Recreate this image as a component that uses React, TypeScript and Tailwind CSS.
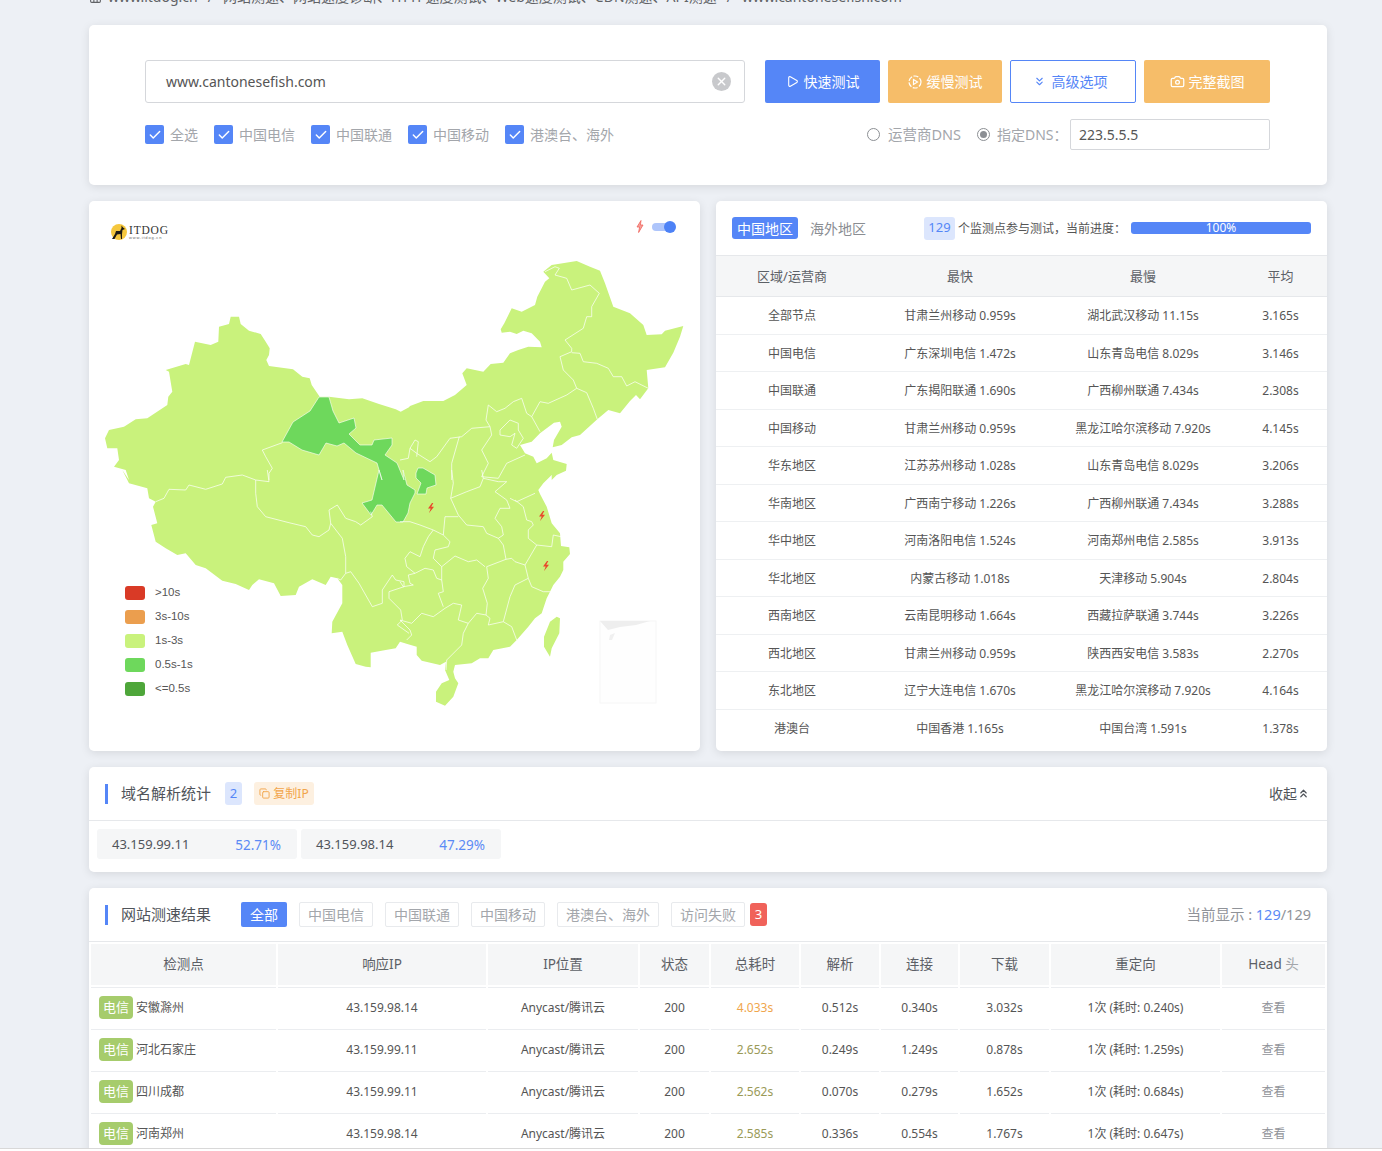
import { Play, Camera, ChevronsDown, ChevronsUp, Copy, Check, X, House } from "lucide-react";

const font = "font-['Noto_Sans','Noto_Sans_CJK_SC',sans-serif]";

// map points are read off the 3x crops: [origin x, origin y, "x,y x,y ..."]
type Seg = [number, number, string];

const toPage = ([ox, oy, s]: Seg) =>
  s
    .trim()
    .split(/\s+/)
    .map((p) => {
      const [x, y] = p.split(",").map(Number);
      return `${(ox + x / 3).toFixed(1)},${(oy + y / 3).toFixed(1)}`;
    })
    .join(" ");

const outline: Seg[] = [
  [89, 200, "425,350 450,350 455,372 480,392 515,402 530,425 542,445 540,465 532,480 540,498 612,508 640,530 662,535 668,555 692,590 720,590 780,598 820,595 870,612 920,628 935,635 960,622"],
  [400, 200, "30,618 70,603 130,603 165,585 200,555 187,520 200,505 250,515 272,492 310,488 330,460 355,450 385,440 425,442 420,425 395,400 370,392 350,402 330,395 305,398 302,388 313,370 335,325 365,335 405,315 412,290 435,245 448,235 430,215 455,195 530,183 570,200 600,212 615,250 640,320 690,340 730,375 740,405 785,403 795,392 850,378 840,410 820,458 795,502 740,510 745,565 720,598 708,585 690,603 660,640 625,630 592,658 540,705 515,712 485,735 458,742 462,720 485,680 480,665 462,668 420,700 395,725 360,735 375,760 400,770 410,790 440,775 455,758 460,780 500,792 498,812 470,825 455,840"],
  [400, 470, "455,15 430,40 415,60 420,72 440,110 455,160 480,190 483,228 508,232 510,252 490,275 490,300 480,320 460,345 450,365 440,385 425,430 405,445 385,470 350,510 330,530 280,540 265,565 240,565 215,580 165,585 160,605 165,625 175,640 160,680 135,707 108,695 108,665 125,640 148,630 135,600 138,575 120,585 65,572 50,555 50,530 22,522 0,515"],
  [89, 470, "920,535 890,540 845,548 845,592 830,590 800,582 775,525 760,485 728,490 730,455 760,400 760,345 745,325 725,320 710,345 670,328 630,350 620,375 575,378 555,340 510,328 490,345 480,360 440,342 400,332 350,295 320,285 290,250 265,255 230,235 200,215 187,165 205,160 192,110 200,95 180,85 175,55 120,40 100,0"],
  [89, 200, "120,840 110,810 75,800 90,780 85,745 55,745 48,715 60,690 105,680 140,658 175,655 235,615 238,590 250,575 240,515 230,510 290,492 300,495 318,425 365,435 388,425 390,380 420,372"],
];

const gansu =
  "319,397 329,397 333,411 339,423 354,418 356,428 349,434 360,445 372,445 374,440 392,438 392,445 385,455 397,463 404,480 403,470 407,485 415,490 415,493 410,503 408,513 403,522 396,522 382,505 377,505 371,515 362,503 372,500 379,470 382,480 377,463 356,453 344,443 337,446 326,443 319,455 302,450 289,442 282,442 293,422 310,411";
const ningxia = "416,473 418,468 423,468 435,475 436,485 427,488 426,494 417,494 421,483 416,478";

const borders: Seg[] = [
  [89, 200, "520,750 580,728"],
  [89, 200, "520,750 530,770 550,805 540,820 540,840"],
  [89, 470, "200,95 225,85 240,58 290,60 300,45 350,58 400,42 410,22 460,15 500,30 540,35 535,0"],
  [89, 470, "500,30 500,70 505,110 530,140 600,158 650,170 670,195 690,200 720,180 725,160 720,120 745,105 770,145 800,155 815,165 850,140 845,125"],
  [89, 470, "725,160 760,205 770,260 770,310 755,330 745,325"],
  [89, 470, "770,310 785,305 810,340 850,410 880,400 880,360 910,315 920,330 945,335 945,350 900,365 900,385 935,420 940,450 925,465 960,490"],
  [400, 470, "155,0 160,40 152,85 175,135 200,165 250,170 260,190 295,205 310,225 318,268"],
  [400, 470, "152,85 200,65 240,50 250,25 295,35 320,35 285,65 320,90 330,115 300,115 285,145 305,170 310,195 295,205"],
  [400, 470, "330,85 350,95 405,70"],
  [400, 470, "345,90 370,110 380,150 395,155 400,165 385,180 385,205 410,225 455,230 460,195 483,200"],
  [400, 470, "410,225 375,285 385,325 395,350 430,365 450,365"],
  [400, 470, "318,268 260,290 265,325 248,355 262,400 258,435 270,445 265,465 310,455 330,380 345,345 385,325"],
  [400, 470, "310,455 335,470 350,510"],
  [400, 470, "258,435 230,430 205,460 175,450 185,405 160,400 135,415 100,440 65,430 35,460 0,450"],
  [400, 470, "318,268 335,265 345,275 375,285"],
  [400, 470, "125,290 165,258 205,275 230,270 255,290"],
  [400, 470, "125,290 125,330 130,365 115,370 130,410"],
  [400, 470, "205,460 190,490 185,525 140,570 138,600"],
  [400, 470, "130,195 150,215 145,230 105,240 100,265 125,290"],
  [400, 470, "130,195 100,180 85,200 70,230 60,260 30,245 15,265 20,290 45,310 75,295 100,300 110,325 125,330"],
  [400, 470, "130,195 135,140 175,140"],
  [400, 470, "45,310 25,315 30,340 40,345 10,350 0,335"],
  [400, 470, "0,155 30,155 60,165 100,180"],
  [400, 470, "0,450 30,480 35,495 20,510"],
  [400, 470, "250,25 245,0"],
  [400, 200, "435,215 465,200 478,205 465,225 500,235 515,270 570,255 598,280 575,320 575,350 560,350 550,385 495,420 515,445 515,455 480,470 490,510 520,540 530,565 500,585 445,610 420,605 395,650 420,695"],
  [400, 200, "515,458 540,460 550,485 590,490 625,505 640,530 665,530 680,558 705,545 745,565"],
  [400, 200, "530,565 560,578 580,625 592,658"],
  [400, 200, "395,650 380,640 365,595 340,605 315,625 290,635 265,615 258,660 270,680 215,685 185,710 150,715 110,770 90,785 50,760 30,745 45,720 55,725 50,770"],
  [400, 200, "270,680 275,705 245,750 265,790 245,830"],
  [400, 200, "300,690 330,660 355,670 355,690 370,715 350,745 335,735 345,700 330,710 300,705 300,690"],
  [400, 200, "375,765 320,790 295,835 245,830"],
  [400, 200, "178,710 155,790 155,840"],
  [400, 200, "0,780 25,775 30,745"],
];

const bolt = "M4.5 0 L0.5 5.5 L3.2 5.5 L1.5 10 L6.5 3.8 L3.8 3.8 L5.8 0 Z";

function ChinaMap() {
  return (
    <svg viewBox="89 201 611 550" className="block w-full h-full">
      <polygon points={outline.map(toPage).join(" ")} fill="#c9f27c" />
      <polygon points={toPage([400, 470, "470,440 480,445 478,490 455,535 450,560 432,530 432,500 450,455"])} fill="#c9f27c" />
      <polygon points={gansu} fill="#6ed85c" stroke="#fff" strokeWidth="0.6" />
      <polygon points={ningxia} fill="#6ed85c" stroke="#fff" strokeWidth="0.6" />
      {borders.map((b, i) => (
        <polyline key={i} points={toPage(b)} fill="none" stroke="#fff" strokeWidth="0.7" />
      ))}
      {/* south china sea inset */}
      <rect x="600" y="621" width="56" height="82" fill="#fefefe" stroke="#f6f6f6" />
      <polygon points="600,621 650,621 636,625 620,627 608,630" fill="#eeeeee" />
      <polygon points="610,635 615,633 612,640 609,640" fill="#f0f0f0" />
      {[[431, 508], [542, 516], [546, 566]].map(([x, y]) => (
        <path key={x} d={bolt} fill="#e8492c" transform={`translate(${x - 3.5} ${y - 5})`} />
      ))}
    </svg>
  );
}

function Logo() {
  return (
    <div className="absolute left-[22px] top-[22px] flex items-center">
      <svg viewBox="0 0 16 16" className="w-[16px] h-[16px]">
        <circle cx="8" cy="8" r="8" fill="#f5c73d" />
        <path d="M1 15 L4 10 L5 7 L9 7 L10.5 4 L10.5 1.5 L12 3.5 L14 5 L11.5 6 L11 10 L11 15 L10 15 L9.5 10 L6 10.5 L3.5 15 Z" fill="#1d1a14" />
      </svg>
      <div className="ml-[2px] mt-[2px] flex flex-col">
        <span className="font-['Liberation_Serif',serif] text-[11.5px] leading-[11px] tracking-[0.8px] text-[#333]">ITDOG</span>
        <span className="font-['Liberation_Sans',sans-serif] text-[4px] leading-[4px] tracking-[0.8px] text-[#666]">www.itdog.cn</span>
      </div>
    </div>
  );
}

const legend = [
  { label: ">10s", bg: "bg-[#d93a26]" },
  { label: "3s-10s", bg: "bg-[#eb9e4e]" },
  { label: "1s-3s", bg: "bg-[#c9f27c]" },
  { label: "0.5s-1s", bg: "bg-[#6ed85c]" },
  { label: "<=0.5s", bg: "bg-[#4ea63a]" },
];

const summary = [
  ["全部节点", "甘肃兰州移动 0.959s", "湖北武汉移动 11.15s", "3.165s"],
  ["中国电信", "广东深圳电信 1.472s", "山东青岛电信 8.029s", "3.146s"],
  ["中国联通", "广东揭阳联通 1.690s", "广西柳州联通 7.434s", "2.308s"],
  ["中国移动", "甘肃兰州移动 0.959s", "黑龙江哈尔滨移动 7.920s", "4.145s"],
  ["华东地区", "江苏苏州移动 1.028s", "山东青岛电信 8.029s", "3.206s"],
  ["华南地区", "广西南宁移动 1.226s", "广西柳州联通 7.434s", "3.288s"],
  ["华中地区", "河南洛阳电信 1.524s", "河南郑州电信 2.585s", "3.913s"],
  ["华北地区", "内蒙古移动 1.018s", "天津移动 5.904s", "2.804s"],
  ["西南地区", "云南昆明移动 1.664s", "西藏拉萨联通 3.744s", "3.226s"],
  ["西北地区", "甘肃兰州移动 0.959s", "陕西西安电信 3.583s", "2.270s"],
  ["东北地区", "辽宁大连电信 1.670s", "黑龙江哈尔滨移动 7.920s", "4.164s"],
  ["港澳台", "中国香港 1.165s", "中国台湾 1.591s", "1.378s"],
];

const results = [
  ["安徽滁州", "43.159.98.14", "4.033s", "0.512s", "0.340s", "3.032s", "1次 (耗时: 0.240s)", "text-[#f0a64c]"],
  ["河北石家庄", "43.159.99.11", "2.652s", "0.249s", "1.249s", "0.878s", "1次 (耗时: 1.259s)", "text-[#9a9a58]"],
  ["四川成都", "43.159.99.11", "2.562s", "0.070s", "0.279s", "1.652s", "1次 (耗时: 0.684s)", "text-[#9a9a58]"],
  ["河南郑州", "43.159.98.14", "2.585s", "0.336s", "0.554s", "1.767s", "1次 (耗时: 0.647s)", "text-[#9a9a58]"],
];

const checks = ["全选", "中国电信", "中国联通", "中国移动", "港澳台、海外"];
const filters = ["中国电信", "中国联通", "中国移动", "港澳台、海外", "访问失败"];

const th = "bg-[#f5f6f7] h-[41px] text-[13.5px] font-normal text-[#5c6066] text-center";
const td = "h-[40px] border-t border-[#ebedf0] text-[12px] text-center";

function SectionTitle({ children }: { children: string }) {
  return (
    <div className="flex items-center">
      <span className="w-[3px] h-[20px] bg-[#5586f7] mr-[13px]" />
      <span className="text-[15px] text-[#50545a]">{children}</span>
    </div>
  );
}

export default function App() {
  return (
    <div className={`${font} h-[1148px] overflow-hidden bg-[#edf0f5] border-b border-[#d8d8d8] box-content`}>
      <div className="ml-[89px] w-[1238px]">
        <div className="h-[25px] overflow-hidden">
          <div className="mt-[-13px] flex items-center gap-[6px] text-[14px] leading-[20px] text-[#606266] whitespace-nowrap">
            <House size={13} />
            <span>www.itdog.cn</span>
            <span className="mx-[4px]">/</span>
            <span>网站测速、网站速度诊断、HTTP速度测试、Web速度测试、CDN测速、API测速</span>
            <span className="mx-[4px]">/</span>
            <span>www.cantonesefish.com</span>
          </div>
        </div>

        <div className="h-[160px] bg-white rounded-[5px] shadow-[0_2px_10px_rgba(0,0,0,0.1)] pl-[56px] pr-[57px] pt-[35px]">
          <div className="flex items-center h-[43px]">
            <div className="w-[600px] h-[43px] border border-[#d5d7db] rounded-[3px] flex items-center justify-between pl-[20px] pr-[13px]">
              <span className="text-[14px] text-[#555]">www.cantonesefish.com</span>
              <span className="w-[19px] h-[19px] rounded-full bg-[#c8c9cc] flex items-center justify-center">
                <X size={13} color="#fff" strokeWidth={2.5} />
              </span>
            </div>
            <button className="ml-[20px] w-[115px] h-[43px] rounded-[2px] bg-[#5586f7] text-white text-[14px] flex items-center justify-center gap-[5px]">
              <Play size={13} />
              快速测试
            </button>
            <button className="ml-[8px] w-[114px] h-[43px] rounded-[2px] bg-[#f6bd69] text-white text-[14px] flex items-center justify-center gap-[5px]">
              <svg viewBox="0 0 14 14" className="w-[14px] h-[14px]" fill="none" stroke="#fff" strokeWidth="1.2">
                <circle cx="7" cy="7" r="6" strokeDasharray="5 1.5" />
                <path d="M5.5 4.5 L9.5 7 L5.5 9.5 Z" />
              </svg>
              缓慢测试
            </button>
            <button className="ml-[8px] w-[126px] h-[43px] rounded-[2px] border border-[#5586f7] bg-white text-[#5586f7] text-[14px] flex items-center justify-center gap-[6px] pr-[6px]">
              <ChevronsDown size={13} />
              高级选项
            </button>
            <button className="ml-[8px] w-[126px] h-[43px] rounded-[2px] bg-[#f6bd69] text-white text-[14px] flex items-center justify-center gap-[4px]">
              <Camera size={15} />
              完整截图
            </button>
          </div>
          <div className="mt-[16px] h-[31px] flex items-center justify-between">
            <div className="flex items-center gap-[16px]">
              {checks.map((c) => (
                <div key={c} className="flex items-center gap-[6px]">
                  <span className="w-[19px] h-[19px] rounded-[2px] bg-[#5586f7] flex items-center justify-center">
                    <Check size={14} color="#fff" strokeWidth={2.5} />
                  </span>
                  <span className="text-[14px] text-[#a3a6ab]">{c}</span>
                </div>
              ))}
            </div>
            <div className="flex items-center">
              <span className="w-[13px] h-[13px] rounded-full border border-[#8c8f94]" />
              <span className="ml-[8px] w-[72px] whitespace-nowrap text-[14.5px] text-[#a3a6ab]">运营商DNS</span>
              <span className="ml-[17px] w-[13px] h-[13px] rounded-full border border-[#8c8f94] flex items-center justify-center">
                <span className="w-[7px] h-[7px] rounded-full bg-[#8c8f94]" />
              </span>
              <span className="ml-[7px] w-[73px] text-[14px] text-[#a3a6ab]">指定DNS：</span>
              <div className="w-[200px] h-[31px] border border-[#d5d7db] rounded-[2px] flex items-center pl-[8px] text-[14px] text-[#555]">223.5.5.5</div>
            </div>
          </div>
        </div>

        <div className="mt-[16px] flex gap-[16px] h-[550px]">
          <div className="relative w-[611px] bg-white rounded-[5px] shadow-[0_2px_10px_rgba(0,0,0,0.1)] overflow-hidden">
            <ChinaMap />
            <Logo />
            <svg viewBox="0 0 8 13" className="absolute left-[547px] top-[19px] w-[8px] h-[13px]" fill="#f0635a" fillOpacity="0.6" stroke="#f0635a" strokeWidth="0.8">
              <path d="M5 0.5 L1 7 L3.6 7 L2.6 12.5 L7 5 L4.4 5 Z" />
            </svg>
            <div className="absolute left-[563px] top-[22px] w-[23px] h-[8px] rounded-full bg-[#aec5fb]">
              <span className="absolute right-[-1px] top-[-2px] w-[12px] h-[12px] rounded-full bg-[#4d82f6]" />
            </div>
            <div className="absolute left-[36px] top-[385px] flex flex-col gap-[10px]">
              {legend.map((l) => (
                <div key={l.label} className="flex items-center h-[14px]">
                  <span className={`w-[20px] h-[14px] rounded-[3px] ${l.bg}`} />
                  <span className="ml-[10px] -mt-[1px] font-['Liberation_Sans',sans-serif] text-[11.5px] text-[#555]">{l.label}</span>
                </div>
              ))}
            </div>
          </div>

          <div className="w-[611px] bg-white rounded-[5px] shadow-[0_2px_10px_rgba(0,0,0,0.1)] overflow-hidden">
            <div className="h-[55px] border-b border-[#e6e8eb] pl-[16px] pr-[16px] flex items-center">
              <span className="w-[66px] h-[22px] rounded-[3px] bg-[#5586f7] text-white text-[14px] flex items-center justify-center">中国地区</span>
              <span className="ml-[12px] text-[14px] text-[#8a8d92]">海外地区</span>
              <span className="ml-[58px] w-[31px] h-[23px] rounded-[3px] bg-[#dce6fd] text-[#5586f7] text-[13px] flex items-center justify-center">129</span>
              <span className="ml-[3px] mt-[2px] w-[173px] text-[12px] text-[#555]">个监测点参与测试，当前进度：</span>
              <div className="w-[180px] h-[12px] rounded-[3px] bg-[#5586f7] text-white text-[12px] leading-[12px] flex items-center justify-center">100%</div>
            </div>
            <table className="w-full table-fixed border-collapse">
              <colgroup>
                <col className="w-[152px]" />
                <col className="w-[184px]" />
                <col className="w-[182px]" />
                <col className="w-[93px]" />
              </colgroup>
              <thead>
                <tr className="bg-[#f5f6f7] h-[40.5px] border-b border-[#e6e8eb]">
                  {["区域/运营商", "最快", "最慢", "平均"].map((h) => (
                    <th key={h} className="pt-[2px] text-[13px] font-normal text-[#5c6066]">{h}</th>
                  ))}
                </tr>
              </thead>
              <tbody>
                {summary.map((r) => (
                  <tr key={r[0]} className="h-[37.5px] border-b border-[#eef0f2] last:border-b-0">
                    {r.map((c, i) => (
                      <td key={i} className="pt-[2px] text-center text-[12px] text-[#555]">{c}</td>
                    ))}
                  </tr>
                ))}
              </tbody>
            </table>
          </div>
        </div>

        <div className="mt-[16px] h-[105px] bg-white rounded-[5px] shadow-[0_2px_10px_rgba(0,0,0,0.1)]">
          <div className="h-[54px] border-b border-[#e6e8eb] pl-[16px] pr-[17px] flex items-center">
            <SectionTitle>域名解析统计</SectionTitle>
            <span className="ml-[14px] w-[17px] h-[23px] rounded-[3px] bg-[#dce6fd] text-[#5586f7] text-[13px] flex items-center justify-center">2</span>
            <span className="ml-[12px] w-[60px] h-[23px] rounded-[3px] bg-[#fdf0e0] text-[#f2a54a] text-[12px] flex items-center justify-center gap-[3px]">
              <Copy size={11} />
              复制IP
            </span>
            <span className="ml-auto flex items-center text-[14px] text-[#50545a]">
              收起
              <ChevronsUp size={13} strokeWidth={2.2} />
            </span>
          </div>
          <div className="pl-[8px] pt-[8px] flex gap-[4px]">
            {[["43.159.99.11", "52.71%"], ["43.159.98.14", "47.29%"]].map(([ip, pct]) => (
              <div key={ip} className="w-[200px] h-[30px] rounded-[3px] bg-[#f5f6f7] pl-[15px] pr-[16px] pt-[2px] flex items-center justify-between">
                <span className="text-[13px] text-[#50545a]">{ip}</span>
                <span className="text-[13.5px] text-[#5b8af5]">{pct}</span>
              </div>
            ))}
          </div>
        </div>

        <div className="mt-[16px] bg-white rounded-t-[5px] shadow-[0_2px_10px_rgba(0,0,0,0.1)]">
          <div className="h-[54px] border-b border-[#e6e8eb] pl-[16px] pr-[16px] flex items-center">
            <SectionTitle>网站测速结果</SectionTitle>
            <span className="ml-[30px] w-[46px] h-[25px] rounded-[2px] bg-[#5586f7] text-white text-[14px] flex items-center justify-center">全部</span>
            {filters.map((f) => (
              <span key={f} className="ml-[12px] h-[25px] px-[8px] rounded-[2px] border border-[#e8eaed] text-[#a3a6ab] text-[14px] flex items-center">{f}</span>
            ))}
            <span className="ml-[5px] w-[17px] h-[23px] rounded-[3px] bg-[#f0625a] text-white text-[13px] flex items-center justify-center">3</span>
            <span className="ml-auto text-[14.5px] text-[#909399]">
              当前显示 : <span className="text-[#5b8af5]">129</span>/129
            </span>
          </div>
          <table className="w-full table-fixed border-separate border-spacing-[2px]">
            <colgroup>
              <col className="w-[185px]" />
              <col className="w-[208px]" />
              <col className="w-[150px]" />
              <col className="w-[69px]" />
              <col className="w-[88px]" />
              <col className="w-[78px]" />
              <col className="w-[77px]" />
              <col className="w-[89px]" />
              <col className="w-[169px]" />
              <col className="w-[103px]" />
            </colgroup>
            <thead>
              <tr>
                {["检测点", "响应IP", "IP位置", "状态", "总耗时", "解析", "连接", "下载", "重定向"].map((h) => (
                  <th key={h} className={th}>{h}</th>
                ))}
                <th className={th}>
                  Head <span className="text-[#a3a6ab]">头</span>
                </th>
              </tr>
            </thead>
            <tbody>
              {results.map((r) => (
                <tr key={r[0]} className="text-[#555]">
                  <td className={`${td} text-left`}>
                    <div className="flex items-center pl-[8px]">
                      <span className="w-[34px] h-[23px] rounded-[4px] bg-[#a6cc6c] text-white text-[13px] flex items-center justify-center">电信</span>
                      <span className="ml-[3px]">{r[0]}</span>
                    </div>
                  </td>
                  <td className={td}>{r[1]}</td>
                  <td className={td}>Anycast/腾讯云</td>
                  <td className={td}>200</td>
                  <td className={`${td} ${r[7]}`}>{r[2]}</td>
                  <td className={td}>{r[3]}</td>
                  <td className={td}>{r[4]}</td>
                  <td className={td}>{r[5]}</td>
                  <td className={td}>{r[6]}</td>
                  <td className={`${td} text-[#909399]`}>查看</td>
                </tr>
              ))}
            </tbody>
          </table>
        </div>
      </div>
    </div>
  );
}
